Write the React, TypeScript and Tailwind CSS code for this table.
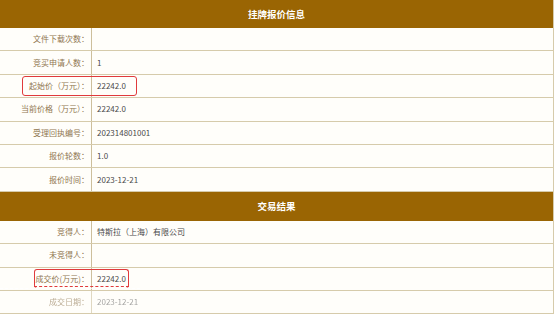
import React from 'react';

// Listing quote info + deal result, laid out as two stacked key/value tables.
type Row = { label: string; value: string; faint?: boolean };

const quoteRows: Row[] = [
  { label: '文件下载次数：', value: '' },
  { label: '竞买申请人数：', value: '1' },
  { label: '起始价（万元）：', value: '22242.0' },
  { label: '当前价格（万元）：', value: '22242.0' },
  { label: '受理回执编号：', value: '202314801001' },
  { label: '报价轮数：', value: '1.0' },
  { label: '报价时间：', value: '2023-12-21' },
];

const resultRows: Row[] = [
  { label: '竞得人：', value: '特斯拉（上海）有限公司' },
  { label: '未竞得人：', value: '' },
  { label: '成交价(万元)：', value: '22242.0' },
  { label: '成交日期：', value: '2023-12-21', faint: true },
];

const font = { fontFamily: '"Noto Sans CJK SC", "Noto Sans", sans-serif' };

function SectionHeader({ title, tall }: { title: string; tall?: boolean }) {
  return (
    <div
      className={`flex items-center justify-center bg-[#9a6503] text-[9.5px] font-bold text-white ${
        tall ? 'h-[29px]' : 'h-[28px]'
      }`}
    >
      {title}
    </div>
  );
}

function InfoRow({ row }: { row: Row }) {
  return (
    <div className="flex h-[23.4px] border-b border-[#d6cbab] text-[8px] leading-none">
      <div
        className={`flex w-[92px] shrink-0 items-center justify-end border-r border-[#cdbf9c] pr-[2px] text-[#8f7650] ${
          row.faint ? 'opacity-60 blur-[0.6px]' : ''
        }`}
      >
        {row.label}
      </div>
      <div
        className={`flex flex-1 items-center pl-[5px] text-[#4a4a4a] ${
          row.faint ? 'opacity-50 blur-[0.7px]' : ''
        }`}
      >
        {row.value}
      </div>
    </div>
  );
}

export default function App() {
  return (
    <div className="h-[316px] w-[554px] overflow-hidden bg-white" style={font}>
      <div className="relative w-[554px] border-r border-[#d6cbab] bg-[#fffefa]">
        <SectionHeader title="挂牌报价信息" />
        {quoteRows.map((r) => (
          <InfoRow key={r.label} row={r} />
        ))}
        <SectionHeader title="交易结果" tall />
        {resultRows.map((r) => (
          <InfoRow key={r.label} row={r} />
        ))}

        {/* highlight boxes over the two price rows */}
        <div className="absolute left-[22px] top-[76px] h-[20px] w-[115px] rounded-[3px] border-[1.5px] border-[#e03a3c]" />
        <div className="absolute left-[34px] top-[269px] h-[19px] w-[95px] rounded-[3px] border-[1.5px] border-b-0 border-[#e03a3c]" />
        <div className="absolute left-[34px] top-[286px] h-0 w-[95px] border-t-[1.5px] border-dashed border-[#e03a3c]" />
        <div className="absolute left-0 top-[288px] h-0 w-[140px] border-t border-dashed border-white" />
      </div>
    </div>
  );
}
